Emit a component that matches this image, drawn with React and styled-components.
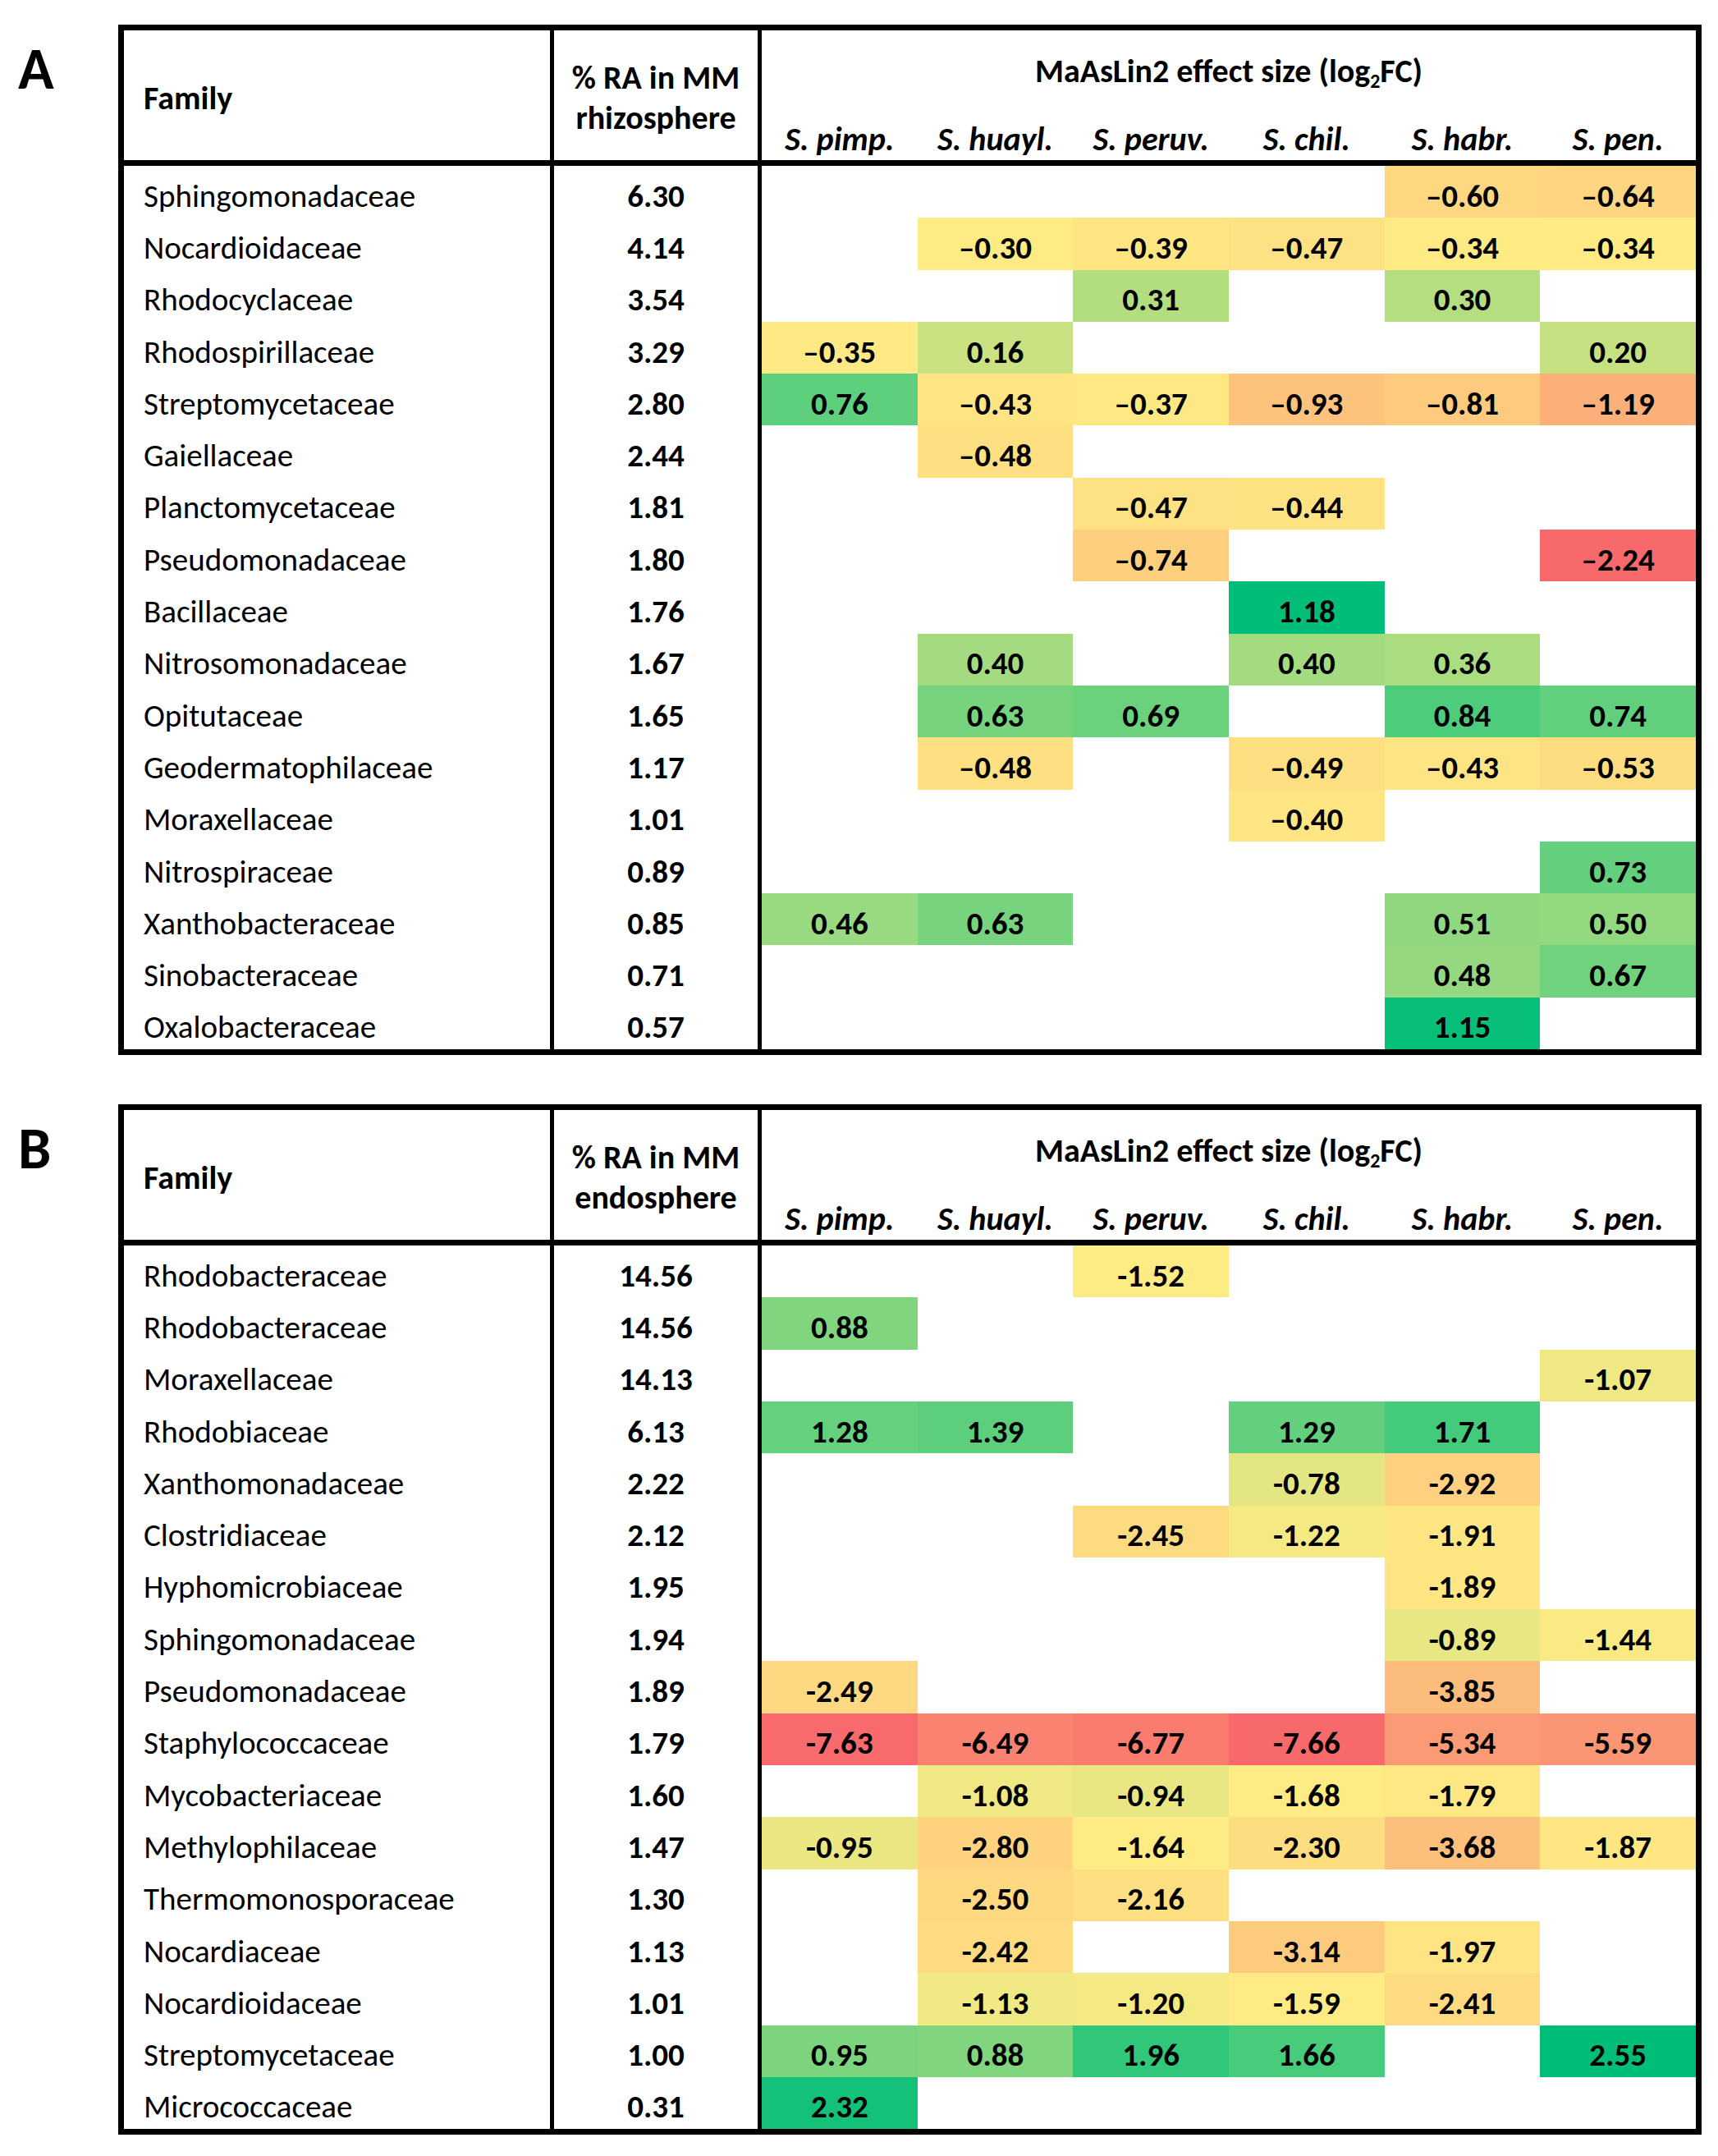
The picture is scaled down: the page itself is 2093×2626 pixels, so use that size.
import React from 'react';
import styled, { createGlobalStyle } from 'styled-components';

const GlobalStyle = createGlobalStyle`
  html, body { margin: 0; padding: 0; background: #ffffff; }
  body {
    font-family: Carlito, Lato, "Liberation Sans", sans-serif;
    color: #000000;
  }
`;

const COLS = '524px 253px repeat(6, 1fr)';

const Page = styled.div`
  width: 2093px;
  padding-top: 30px;
  display: flex;
  flex-direction: column;
  gap: 60px;
`;

const Panel = styled.section`
  display: grid;
  grid-template-columns: 144px 1929px;
  align-items: start;
`;

const PanelLabel = styled.div`
  font-size: 72px;
  font-weight: 700;
  line-height: 1;
  padding: 17px 0 0 22px;
`;

const Table = styled.div`
  width: 1929px;
  box-sizing: border-box;
  border: 7px solid #000000;
`;

const HeaderRow = styled.div`
  display: grid;
  grid-template-columns: ${COLS};
  height: 165px;
  box-sizing: border-box;
  border-bottom: 7px solid #000000;
  font-weight: 700;
  font-size: 40px;
`;

const HeadFamily = styled.div`
  display: flex;
  align-items: center;
  padding: 6px 0 0 24px;
  border-right: 5px solid #000000;
`;

const HeadRA = styled.div`
  display: flex;
  flex-direction: column;
  align-items: center;
  justify-content: center;
  padding-top: 6px;
  line-height: 49px;
  text-align: center;
  border-right: 5px solid #000000;
`;

const EffectHead = styled.div`
  grid-column: 3 / span 6;
  display: flex;
  flex-direction: column;
`;

const EffectTitle = styled.div`
  height: 100px;
  display: flex;
  align-items: center;
  justify-content: center;
  padding-bottom: 2px;
  box-sizing: border-box;
`;

const Sub = styled.span`
  font-size: 0.6em;
  vertical-align: -0.3em;
  line-height: 0;
`;

const SpeciesRow = styled.div`
  display: grid;
  grid-template-columns: repeat(6, 1fr);
  height: 58px;
`;

const Species = styled.div`
  display: flex;
  align-items: center;
  justify-content: center;
  padding-top: 6px;
  font-style: italic;
`;

const Row = styled.div`
  display: grid;
  grid-template-columns: ${COLS};
  height: 63.3px;
  font-size: 39px;
`;

const FamilyCell = styled.div`
  display: flex;
  align-items: center;
  padding: 9px 0 0 24px;
  border-right: 5px solid #000000;
  white-space: nowrap;
`;

const RACell = styled.div`
  display: flex;
  align-items: center;
  justify-content: center;
  padding-top: 9px;
  font-weight: 700;
  border-right: 5px solid #000000;
`;

const ValueCell = styled.div`
  display: flex;
  align-items: center;
  justify-content: center;
  padding-top: 9px;
  font-weight: 700;
  background: ${(p) => p.$bg || 'transparent'};
`;

const SPECIES = ['S. pimp.', 'S. huayl.', 'S. peruv.', 'S. chil.', 'S. habr.', 'S. pen.'];

const _ = null;

const RHIZO = [
  ['Sphingomonadaceae', '6.30', [_, _, _, _, -0.6, -0.64]],
  ['Nocardioidaceae', '4.14', [_, -0.3, -0.39, -0.47, -0.34, -0.34]],
  ['Rhodocyclaceae', '3.54', [_, _, 0.31, _, 0.3, _]],
  ['Rhodospirillaceae', '3.29', [-0.35, 0.16, _, _, _, 0.2]],
  ['Streptomycetaceae', '2.80', [0.76, -0.43, -0.37, -0.93, -0.81, -1.19]],
  ['Gaiellaceae', '2.44', [_, -0.48, _, _, _, _]],
  ['Planctomycetaceae', '1.81', [_, _, -0.47, -0.44, _, _]],
  ['Pseudomonadaceae', '1.80', [_, _, -0.74, _, _, -2.24]],
  ['Bacillaceae', '1.76', [_, _, _, 1.18, _, _]],
  ['Nitrosomonadaceae', '1.67', [_, 0.4, _, 0.4, 0.36, _]],
  ['Opitutaceae', '1.65', [_, 0.63, 0.69, _, 0.84, 0.74]],
  ['Geodermatophilaceae', '1.17', [_, -0.48, _, -0.49, -0.43, -0.53]],
  ['Moraxellaceae', '1.01', [_, _, _, -0.4, _, _]],
  ['Nitrospiraceae', '0.89', [_, _, _, _, _, 0.73]],
  ['Xanthobacteraceae', '0.85', [0.46, 0.63, _, _, 0.51, 0.5]],
  ['Sinobacteraceae', '0.71', [_, _, _, _, 0.48, 0.67]],
  ['Oxalobacteraceae', '0.57', [_, _, _, _, 1.15, _]],
];

const ENDO = [
  ['Rhodobacteraceae', '14.56', [_, _, -1.52, _, _, _]],
  ['Rhodobacteraceae', '14.56', [0.88, _, _, _, _, _]],
  ['Moraxellaceae', '14.13', [_, _, _, _, _, -1.07]],
  ['Rhodobiaceae', '6.13', [1.28, 1.39, _, 1.29, 1.71, _]],
  ['Xanthomonadaceae', '2.22', [_, _, _, -0.78, -2.92, _]],
  ['Clostridiaceae', '2.12', [_, _, -2.45, -1.22, -1.91, _]],
  ['Hyphomicrobiaceae', '1.95', [_, _, _, _, -1.89, _]],
  ['Sphingomonadaceae', '1.94', [_, _, _, _, -0.89, -1.44]],
  ['Pseudomonadaceae', '1.89', [-2.49, _, _, _, -3.85, _]],
  ['Staphylococcaceae', '1.79', [-7.63, -6.49, -6.77, -7.66, -5.34, -5.59]],
  ['Mycobacteriaceae', '1.60', [_, -1.08, -0.94, -1.68, -1.79, _]],
  ['Methylophilaceae', '1.47', [-0.95, -2.8, -1.64, -2.3, -3.68, -1.87]],
  ['Thermomonosporaceae', '1.30', [_, -2.5, -2.16, _, _, _]],
  ['Nocardiaceae', '1.13', [_, -2.42, _, -3.14, -1.97, _]],
  ['Nocardioidaceae', '1.01', [_, -1.13, -1.2, -1.59, -2.41, _]],
  ['Streptomycetaceae', '1.00', [0.95, 0.88, 1.96, 1.66, _, 2.55]],
  ['Micrococcaceae', '0.31', [2.32, _, _, _, _, _]],
];

const RED = [248, 105, 107];
const YEL = [255, 235, 132];
const GRN = [0, 190, 120];

function lerp(a, b, t) {
  return a.map((v, i) => Math.round(v + (b[i] - v) * t));
}

function buildScale(rows) {
  const vals = rows.flatMap((r) => r[2].filter((v) => v !== null)).sort((a, b) => a - b);
  const n = vals.length;
  const mid = n % 2 ? vals[(n - 1) / 2] : (vals[n / 2 - 1] + vals[n / 2]) / 2;
  const min = vals[0];
  const max = vals[n - 1];
  return (v) => {
    let c;
    if (v <= mid) c = lerp(YEL, RED, (mid - v) / (mid - min));
    else c = lerp(YEL, GRN, Math.pow((v - mid) / (max - mid), 1.4));
    return `rgb(${c[0]}, ${c[1]}, ${c[2]})`;
  };
}

function fmt(v, dash) {
  const s = Math.abs(v).toFixed(2);
  return v < 0 ? dash + s : s;
}

function EffectTable({ rows, compartment, dash }) {
  const color = buildScale(rows);
  return (
    <Table>
      <HeaderRow>
        <HeadFamily>Family</HeadFamily>
        <HeadRA>
          <span>% RA in MM</span>
          <span>{compartment}</span>
        </HeadRA>
        <EffectHead>
          <EffectTitle>
            <span>
              MaAsLin2 effect size (log<Sub>2</Sub>FC)
            </span>
          </EffectTitle>
          <SpeciesRow>
            {SPECIES.map((s) => (
              <Species key={s}>{s}</Species>
            ))}
          </SpeciesRow>
        </EffectHead>
      </HeaderRow>
      {rows.map(([fam, ra, vals], i) => (
        <Row key={fam + i}>
          <FamilyCell>{fam}</FamilyCell>
          <RACell>{ra}</RACell>
          {vals.map((v, j) => (
            <ValueCell key={j} $bg={v === null ? null : color(v)}>
              {v === null ? '' : fmt(v, dash)}
            </ValueCell>
          ))}
        </Row>
      ))}
    </Table>
  );
}

export default function App() {
  return (
    <>
      <GlobalStyle />
      <Page>
        <Panel>
          <PanelLabel>A</PanelLabel>
          <EffectTable rows={RHIZO} compartment="rhizosphere" dash={'\u2013'} />
        </Panel>
        <Panel>
          <PanelLabel>B</PanelLabel>
          <EffectTable rows={ENDO} compartment="endosphere" dash="-" />
        </Panel>
      </Page>
    </>
  );
}
